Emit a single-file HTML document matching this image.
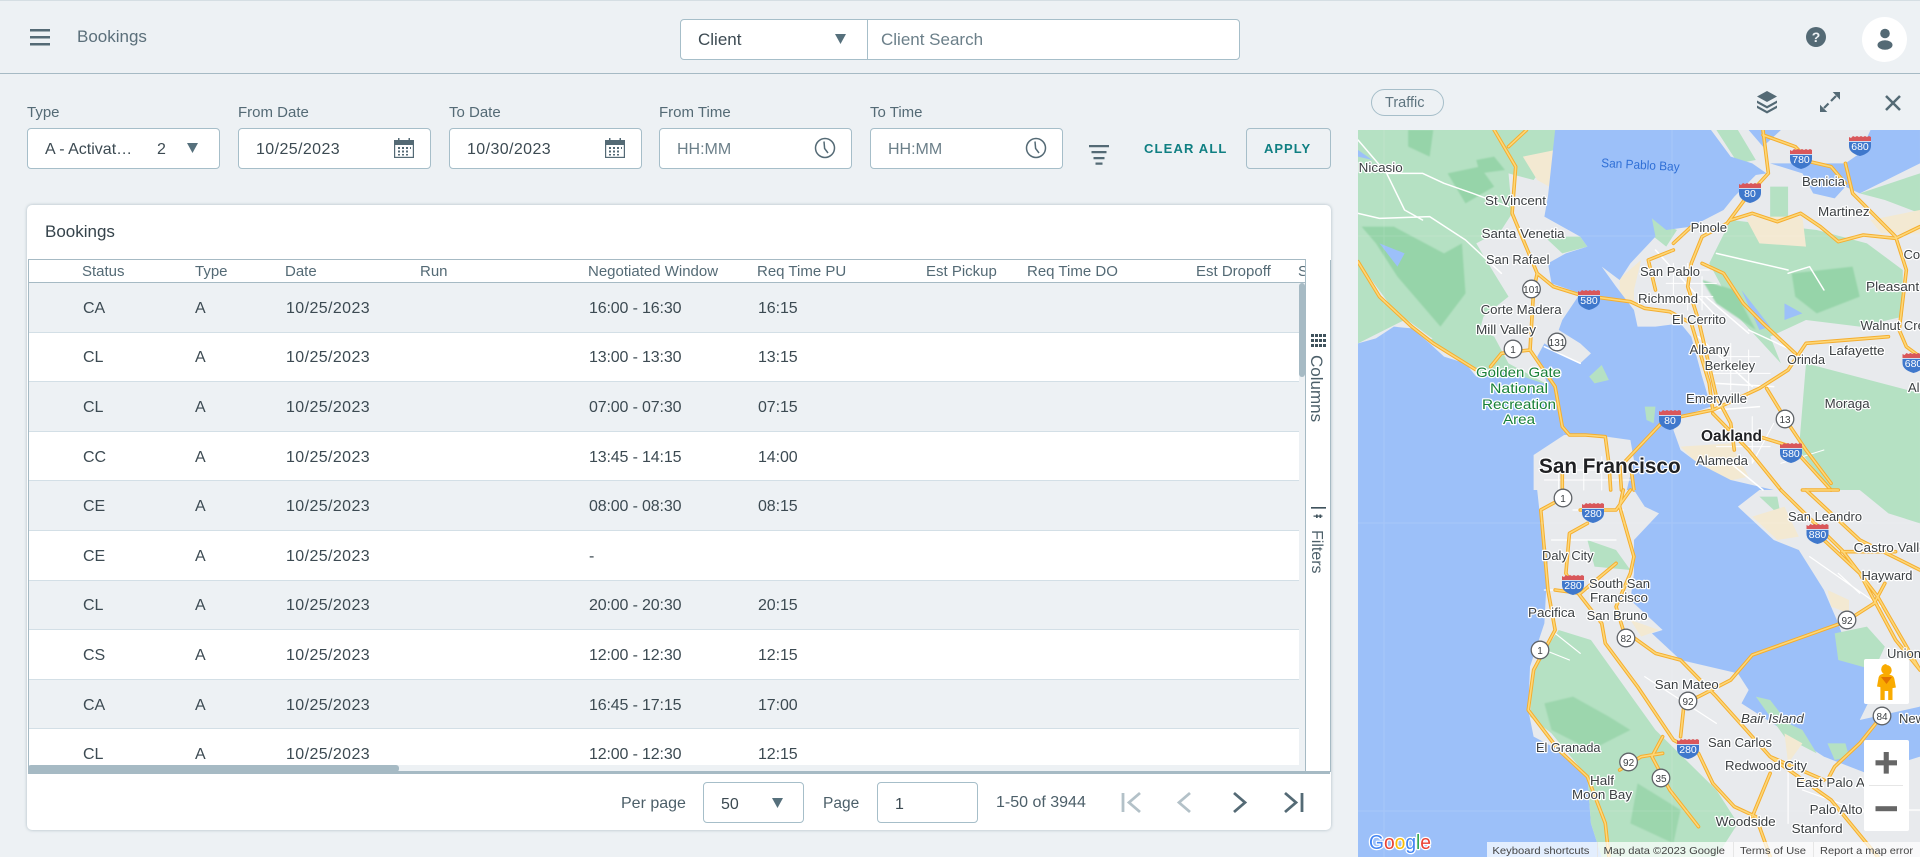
<!DOCTYPE html>
<html lang="en">
<head>
<meta charset="utf-8">
<title>Bookings</title>
<style>
html,body{margin:0;padding:0}
body{width:1920px;height:857px;position:relative;overflow:hidden;background:#edf1f4;font-family:"Liberation Sans",sans-serif;color:#3c4a52}
.a{position:absolute;white-space:nowrap}
.line{position:absolute;background:#a6bac4}
.box{position:absolute;box-sizing:border-box;background:#fff;border:1px solid #a6bec9;border-radius:4px}
.lbl{position:absolute;font-size:15px;line-height:18px;color:#546a75;white-space:nowrap}
.val{position:absolute;font-size:16px;line-height:20px;color:#3c4a52;letter-spacing:.4px;white-space:nowrap}
.ph{position:absolute;font-size:16px;line-height:20px;color:#6b7f89;white-space:nowrap}
.hd{position:absolute;top:263px;font-size:15px;line-height:18px;color:#546a75;white-space:nowrap}
.row{height:49.6px;box-sizing:border-box;padding-top:3px;border-bottom:1px solid #d3dfe6;display:flex;align-items:center;font-size:16px;color:#3c4a52;background:#fff}
.row:nth-child(odd){background:#edf1f4}
.row span{display:block;white-space:nowrap}
.s{width:112px;margin-left:54px}
.t{width:91px}
.d{width:303px;letter-spacing:.4px}
.w{width:169px;letter-spacing:-.15px}
.r{width:80px;letter-spacing:-.1px}
svg{position:absolute;overflow:hidden}
.rd{fill:none;vector-effect:non-scaling-stroke;stroke-linejoin:round;stroke-linecap:round}
.m text{font-family:"Liberation Sans",sans-serif;font-size:13px;fill:#3c4043;paint-order:stroke;stroke:#fff;stroke-width:2.4px;stroke-linejoin:round}
.m .g text{font-size:14px;fill:#188038}
.sh{font-size:10.5px!important;fill:#fff!important;stroke:none!important;text-anchor:middle;font-weight:400}
.us{font-size:10px!important;fill:#3c4043!important;stroke:none!important;text-anchor:middle}
.at{font-size:10.5px!important;fill:#444!important;stroke:none!important}
</style>
</head>
<body>
<div class="a" style="left:0;top:0;width:1920px;height:1px;background:#d5dee3"></div>
<div class="line" style="left:0;top:73px;width:1920px;height:1px"></div>

<svg style="left:30px;top:29px" width="20" height="17" viewBox="0 0 20 17"><path d="M0 0h20v2.5H0zM0 7h20v2.5H0zM0 14h20v2.5H0z" fill="#546a75"/></svg>
<div class="a" style="left:77px;top:27px;font-size:17px;line-height:20px;color:#5b6f7a">Bookings</div>

<div class="box" style="left:680px;top:19px;width:560px;height:41px"></div>
<div class="a" style="left:867px;top:19px;width:1px;height:41px;background:#a6bec9"></div>
<div class="a" style="left:698px;top:30px;font-size:17px;line-height:20px;color:#3c4a52">Client</div>
<svg style="left:835px;top:34px" width="11" height="10"><path d="M0 0h11L5.500 10z" fill="#56707c"/></svg>
<div class="a" style="left:881px;top:30px;font-size:17px;line-height:20px;color:#6b7f89">Client Search</div>

<svg style="left:1805px;top:26px" width="22" height="22" viewBox="0 0 22 22"><circle cx="11" cy="11" r="10" fill="#546a75"/><text x="11" y="16" text-anchor="middle" font-family="Liberation Sans" font-weight="700" font-size="14" fill="#edf1f4">?</text></svg>
<div class="a" style="left:1862px;top:17px;width:45px;height:45px;border-radius:50%;background:#fff"></div>
<svg style="left:1875px;top:28px" width="20" height="22" viewBox="0 0 20 22"><circle cx="10" cy="5.500" r="4.800" fill="#546a75"/><ellipse cx="10" cy="17" rx="7.500" ry="4.800" fill="#546a75"/></svg>

<div class="lbl" style="left:27px;top:104px">Type</div>
<div class="lbl" style="left:238px;top:104px">From Date</div>
<div class="lbl" style="left:449px;top:104px">To Date</div>
<div class="lbl" style="left:659px;top:104px">From Time</div>
<div class="lbl" style="left:870px;top:104px">To Time</div>

<div class="box" style="left:27px;top:128px;width:193px;height:41px"></div>
<div class="val" style="left:45px;top:140px;letter-spacing:0">A - Activat…</div>
<div class="val" style="left:157px;top:140px">2</div>
<svg style="left:187px;top:143px" width="11" height="10"><path d="M0 0h11L5.500 10z" fill="#56707c"/></svg>

<div class="box" style="left:238px;top:128px;width:193px;height:41px"></div>
<div class="val" style="left:256px;top:140px">10/25/2023</div>
<svg style="left:394px;top:138px" width="20" height="20" viewBox="0 0 20 20"><path d="M4 0h1.500v3H4zM14.500 0H16v3h-1.500z" fill="#546a75"/><rect x="0" y="2" width="20" height="5" fill="#546a75"/><rect x=".6" y="5" width="18.800" height="14.400" fill="none" stroke="#546a75" stroke-width="1.200"/><path d="M4 9h2v2H4zM8 9h2v2H8zM12 9h2v2h-2zM16 9h1v2h-1zM4 12.500h2v2H4zM8 12.500h2v2H8zM12 12.500h2v2h-2zM4 16h2v1.500H4zM8 16h2v1.500H8zM12 16h2v1.500h-2z" fill="#546a75"/></svg>

<div class="box" style="left:449px;top:128px;width:193px;height:41px"></div>
<div class="val" style="left:467px;top:140px">10/30/2023</div>
<svg style="left:605px;top:138px" width="20" height="20" viewBox="0 0 20 20"><path d="M4 0h1.500v3H4zM14.500 0H16v3h-1.500z" fill="#546a75"/><rect x="0" y="2" width="20" height="5" fill="#546a75"/><rect x=".6" y="5" width="18.800" height="14.400" fill="none" stroke="#546a75" stroke-width="1.200"/><path d="M4 9h2v2H4zM8 9h2v2H8zM12 9h2v2h-2zM16 9h1v2h-1zM4 12.500h2v2H4zM8 12.500h2v2H8zM12 12.500h2v2h-2zM4 16h2v1.500H4zM8 16h2v1.500H8zM12 16h2v1.500h-2z" fill="#546a75"/></svg>

<div class="box" style="left:659px;top:128px;width:193px;height:41px"></div>
<div class="ph" style="left:677px;top:140px">HH:MM</div>
<svg style="left:814px;top:137px" width="22" height="22" viewBox="0 0 22 22"><circle cx="11" cy="11" r="9.500" fill="none" stroke="#546a75" stroke-width="1.500"/><path d="M10 4.500l.6 7 3.400 4.500" fill="none" stroke="#546a75" stroke-width="1.500"/></svg>

<div class="box" style="left:870px;top:128px;width:193px;height:41px"></div>
<div class="ph" style="left:888px;top:140px">HH:MM</div>
<svg style="left:1025px;top:137px" width="22" height="22" viewBox="0 0 22 22"><circle cx="11" cy="11" r="9.500" fill="none" stroke="#546a75" stroke-width="1.500"/><path d="M10 4.500l.6 7 3.400 4.500" fill="none" stroke="#546a75" stroke-width="1.500"/></svg>

<svg style="left:1089px;top:145px" width="20" height="20" viewBox="0 0 20 20"><path d="M0 0h20v2.200H0zM2.500 6h15v2.200h-15zM4.500 12h11v2.200h-11zM6.500 17.500h7v2.200h-7z" fill="#546a75"/></svg>
<div class="a" style="left:1144px;top:140px;font-size:13px;line-height:18px;font-weight:700;letter-spacing:1.15px;color:#0f7f82">CLEAR ALL</div>
<div class="box" style="left:1246px;top:128px;width:85px;height:41px;background:#edf1f4"></div>
<div class="a" style="left:1264px;top:140px;font-size:13px;line-height:18px;font-weight:700;letter-spacing:1px;color:#0f7f82">APPLY</div>

<div class="a" style="left:27px;top:205px;width:1304px;height:625px;background:#fff;border-radius:5px;box-shadow:0 0 3px rgba(90,120,135,.45)"></div>
<div class="a" style="left:45px;top:222px;font-size:17px;line-height:20px;color:#35434b">Bookings</div>

<div class="line" style="left:28px;top:259px;width:1277px;height:1px"></div>
<div class="line" style="left:28px;top:282px;width:1277px;height:1px"></div>
<div class="line" style="left:28px;top:260px;width:1px;height:511px"></div>

<div class="hd" style="left:82px">Status</div>
<div class="hd" style="left:195px">Type</div>
<div class="hd" style="left:285px">Date</div>
<div class="hd" style="left:420px">Run</div>
<div class="hd" style="left:588px">Negotiated Window</div>
<div class="hd" style="left:757px">Req Time PU</div>
<div class="hd" style="left:926px">Est Pickup</div>
<div class="hd" style="left:1027px">Req Time DO</div>
<div class="hd" style="left:1196px">Est Dropoff</div>
<div class="a" style="left:1298px;top:263px;width:7px;height:18px;overflow:hidden;font-size:15px;line-height:18px;color:#546a75">S</div>

<div class="a" style="left:29px;top:283px;width:1270px;height:482px;overflow:hidden;white-space:normal">
<div class="row"><span class="s">CA</span><span class="t">A</span><span class="d">10/25/2023</span><span class="w">16:00 - 16:30</span><span class="r">16:15</span></div>
<div class="row"><span class="s">CL</span><span class="t">A</span><span class="d">10/25/2023</span><span class="w">13:00 - 13:30</span><span class="r">13:15</span></div>
<div class="row"><span class="s">CL</span><span class="t">A</span><span class="d">10/25/2023</span><span class="w">07:00 - 07:30</span><span class="r">07:15</span></div>
<div class="row"><span class="s">CC</span><span class="t">A</span><span class="d">10/25/2023</span><span class="w">13:45 - 14:15</span><span class="r">14:00</span></div>
<div class="row"><span class="s">CE</span><span class="t">A</span><span class="d">10/25/2023</span><span class="w">08:00 - 08:30</span><span class="r">08:15</span></div>
<div class="row"><span class="s">CE</span><span class="t">A</span><span class="d">10/25/2023</span><span class="w">-</span><span class="r"></span></div>
<div class="row"><span class="s">CL</span><span class="t">A</span><span class="d">10/25/2023</span><span class="w">20:00 - 20:30</span><span class="r">20:15</span></div>
<div class="row"><span class="s">CS</span><span class="t">A</span><span class="d">10/25/2023</span><span class="w">12:00 - 12:30</span><span class="r">12:15</span></div>
<div class="row"><span class="s">CA</span><span class="t">A</span><span class="d">10/25/2023</span><span class="w">16:45 - 17:15</span><span class="r">17:00</span></div>
<div class="row"><span class="s">CL</span><span class="t">A</span><span class="d">10/25/2023</span><span class="w">12:00 - 12:30</span><span class="r">12:15</span></div>
</div>

<div class="a" style="left:1299px;top:283px;width:6px;height:488px;background:#edf1f4"></div>
<div class="a" style="left:1299px;top:283px;width:6px;height:94px;background:#a6bac4;border-radius:3px"></div>
<div class="a" style="left:29px;top:765px;width:1276px;height:6px;background:#edf1f4"></div>
<div class="a" style="left:28px;top:765px;width:371px;height:7px;background:#a6bac4;border-radius:3px"></div>
<div class="line" style="left:28px;top:771px;width:1302px;height:3px"></div>

<div class="line" style="left:1305px;top:259px;width:1px;height:512px"></div>
<div class="line" style="left:1330px;top:260px;width:1px;height:512px"></div>
<svg style="left:1311px;top:334px" width="15" height="14" viewBox="0 0 15 14"><path d="M0 0h3v3H0zM4 0h3v3H4zM8 0h3v3H8zM12 0h3v3h-3zM0 5h3v3H0zM4 5h3v3H4zM8 5h3v3H8zM12 5h3v3h-3zM0 10h3v3H0zM4 10h3v3H4zM8 10h3v3H8zM12 10h3v3h-3z" fill="#3f525c"/></svg>
<div class="a" style="left:1307px;top:355px;writing-mode:vertical-rl;font-size:17px;line-height:18px;color:#4c5f69">Columns</div>
<svg style="left:1311px;top:507px" width="15" height="12" viewBox="0 0 15 12"><path d="M0 0h15v1.600H0zM5 7.500h1.700v3.500H5zM8.500 7.500h1.700v3.500H8.500zM2.500 8.500h9v1.300h-9z" fill="#3f525c"/></svg>
<div class="a" style="left:1307px;top:530px;writing-mode:vertical-rl;font-size:16px;line-height:18px;color:#4c5f69">Filters</div>

<div class="a" style="left:621px;top:794px;font-size:16px;line-height:20px;color:#4c5f69">Per page</div>
<div class="box" style="left:703px;top:782px;width:101px;height:41px"></div>
<div class="val" style="left:721px;top:795px;letter-spacing:0">50</div>
<svg style="left:772px;top:798px" width="11" height="10"><path d="M0 0h11L5.500 10z" fill="#56707c"/></svg>
<div class="a" style="left:823px;top:794px;font-size:15.500px;line-height:20px;color:#4c5f69">Page</div>
<div class="box" style="left:877px;top:782px;width:101px;height:41px"></div>
<div class="val" style="left:895px;top:795px">1</div>
<div class="a" style="left:996px;top:793px;font-size:16px;line-height:20px;color:#4c5f69">1-50 of 3944</div>
<svg style="left:1120px;top:790px" width="190" height="26" viewBox="0 0 190 26" fill="none" stroke-width="2.800">
<path d="M3 3v19" stroke="#b3c1c8"/><path d="M20 3L9 12.500 20 22" stroke="#b3c1c8"/>
<path d="M70 3L59 12.500 70 22" stroke="#b3c1c8"/>
<path d="M114 3l11 9.500L114 22" stroke="#546a75"/>
<path d="M165 3l11 9.500L165 22" stroke="#546a75"/><path d="M182 3v19" stroke="#546a75"/>
</svg>

<div class="a" style="left:1371px;top:89px;width:71px;height:25px;border:1px solid #a6bec9;border-radius:14px"></div>
<div class="a" style="left:1385px;top:92.500px;font-size:14.500px;line-height:20px;color:#5e747f">Traffic</div>
<svg style="left:1756px;top:91px" width="22" height="23" viewBox="0 0 22 23" fill="#546a75"><path d="M11 0l10 5.500-10 5.500L1 5.500z"/><path d="M1 9.500l10 5.500 10-5.500v2.500l-10 5.500L1 12z"/><path d="M1 14.500l10 5.500 10-5.500V17l-10 5.500L1 17z"/></svg>
<svg style="left:1820px;top:92px" width="21" height="21" viewBox="0 0 21 21"><path d="M12.700 0H20v7.700zM0 12.700V20h7.300z" fill="#546a75"/><path d="M16 4l-5 5M4 16l4.500-4.500" stroke="#546a75" stroke-width="2.200" fill="none"/></svg>
<svg style="left:1884px;top:94px" width="18" height="18" viewBox="0 0 18 18"><path d="M2 2l14 14M16 2L2 16" stroke="#546a75" stroke-width="2.500"/></svg>

<svg class="m" style="left:1358px;top:130px" width="562" height="727" viewBox="0 0 562 727">
<defs>
<filter id="b" x="-5%" y="-5%" width="110%" height="110%"><feGaussianBlur stdDeviation="2.500"/></filter>
<path id="z1" class="rd" d="M380 0L440 110 430 250 500 430 490 480 480 660 550 770 570 890 590 915 635 915 690 920 700 1000 705 1080M420 50L470 0M500 430L545 470 620 495 760 515 800 535 870 545 930 580 980 760 990 840M1130 0L1145 130 1085 200 1030 280 960 320 930 400 920 470 950 570 1000 800 1040 880 1050 960M1040 270L1100 250 1170 275 1235 250 1290 290 1340 335 1410 315 1500 325 1568 290M1360 100L1380 190 1500 320 1530 420 1510 600 1530 650 1568 680M1130 15L1220 50 1260 95 1320 110 1360 160M740 1000L855 870 990 840 1120 775 1200 720 1250 640 1480 620M1140 775L1200 880 1250 960 1320 1060M1120 920L1210 950 1320 1080M990 850L1090 960 1180 1080M0 395L60 500 150 590 210 640 270 680 330 720M960 400L1020 430 1075 520 1130 580 1220 670M880 360L810 390 830 480M880 340L930 290M730 1000L735 1080M760 1000L770 1080M570 1030V1080M480 660L400 670 370 710"/>
<path id="z2" class="rd" d="M740 0L730 50 770 200 760 250 720 350 740 420 830 490 900 510 1000 620 1150 800 1320 930 1450 1100M640 100L590 130 580 250 600 290 680 400 690 460 780 590 880 750 950 790 990 880 1050 950 1110 980 1150 1100M620 60L720 60 760 0M1360 395L1100 495 1040 570 950 620 910 640 900 740M1360 395L1440 340 1470 280M1280 130L1400 250 1500 450 1568 540M570 25L510 60 530 300 550 420 490 540 475 660 560 780 640 860 690 1000 700 1100M1460 680L1400 760 1330 830 1310 870M850 740L820 800 850 860 870 900 950 1010M730 840L790 800 850 790M1180 0L1350 180 1450 320 1568 540M1250 0L1400 150 1568 240M1300 870L1150 800M1150 850L1100 980M1240 0L1340 0M1350 185L1500 185M550 300L620 310 720 220"/>
</defs>
<rect width="562" height="727" fill="#e8eaed"/>

<g transform="scale(.3584 .33333)">
<path d="M0 0H550V60L490 150 420 130 430 250 400 300 330 340 380 430 420 500 350 560 340 600 230 640 200 620 100 540 0 395Z" fill="#b5e1c3"/>
<path d="M0 400L50 490 130 570 0 640Z" fill="#b5e1c3"/>
<path d="M140 0H210L200 80 140 50ZM250 130L340 110 380 170 300 220ZM10 290L100 290 240 370 290 340 300 490 230 590 110 440 50 340ZM330 90L380 80 410 120 340 130Z" fill="#96d4a9" filter="url(#b)"/>
<path d="M1040 270L1280 300 1420 340 1520 420 1520 560 1400 590 1250 570 1150 620 1180 700 1060 560 980 400Z" fill="#b5e1c3"/>
<path d="M1210 430L1380 410 1400 500 1280 550 1220 500ZM960 450L1050 480 1110 600 1000 520Z" fill="#96d4a9" filter="url(#b)"/>
<path d="M1250 700L1568 790V1080H1320L1230 960Z" fill="#b5e1c3"/>
<path d="M1000 0H1060L1110 90 1060 100ZM820 265L890 300 860 350 825 320ZM1150 170L1200 170 1200 270 1150 270ZM1400 190L1568 130V250L1470 210ZM520 320L620 320 640 350 570 370Z" fill="#b5e1c3"/>
<path d="M460 80L550 60 550 180 500 150ZM1080 260L1240 260 1250 350 1120 340ZM730 445L790 390 770 480 770 520 730 500ZM900 950L1040 940 1090 1040 1000 1060ZM1430 270L1568 240V310L1460 310Z" fill="#f3e9d2"/>
<path d="M200 630L290 580 380 620 420 700 540 770 570 830 570 905 480 850 340 730Z" fill="#b5e1c3"/>
<path d="M0 640L50 625 100 590 150 595 200 640 240 680 300 700 330 740 420 725 530 765 560 830 575 915 490 975 490 1080H0Z" fill="#9cc0f9"/>
<path d="M550 0H985L1040 80 1100 100 1140 130 1110 135 1050 200 1020 240 930 290 860 300 820 265 830 320 760 400 730 450 680 410 720 470 770 540 780 590 830 590 900 580 930 620 960 740 985 830 900 860 880 900 900 960 950 1000 1040 1050 1160 1080H750L770 990 760 930 640 912 575 915 560 830 530 765 500 680 520 640 580 680 620 700 650 670 620 640 560 600 570 570 620 490 540 460 530 400 580 370 640 350 620 320 520 260 530 200 540 100Z" fill="#9cc0f9"/>
<path d="M1150 100L1240 130 1270 190 1330 205 1360 170 1400 190 1568 100V0H1430L1400 70 1360 100 1310 100 1260 100ZM1180 0H1090L1130 50ZM1070 480L1150 590 1120 600ZM1190 520L1240 550 1190 570ZM40 90L0 60V80ZM60 340L130 370 110 410Z" fill="#9cc0f9"/>
<path d="M645 740L680 705 700 750 660 760ZM800 830L830 830 825 880 805 870Z" fill="#b5e1c3"/>
<path d="M0 30L80 130 180 130 240 160 320 190 420 230M0 250L60 265 200 260 300 330 400 430M80 130L130 240 180 270M1200 430L1260 410 1300 480M1000 370L1200 420M1090 600L1210 660M830 360L1000 560M950 620L1100 770M1000 760L1160 770M1000 840L1120 830M970 500L1090 610M1040 1000L1130 1080M520 650L620 700" class="rd" stroke="#fff" stroke-width="1.500"/>
<path d="M880 420H980M860 460H1000M840 500H990M880 400V520M920 400V540M960 440V540M1030 680H1120M990 730H1150M1040 640V780M1090 660V800M1100 860V1000M1160 880L1100 1000M1000 950H1150M1180 1000L1300 960M520 1020H760M520 1050H760M560 1000V1080M630 990V1080M680 980V1080" class="rd" stroke="#fff" stroke-width="1"/>
<use href="#z1" stroke="#f5ae2f" stroke-width="3.600"/>
<use href="#z1" stroke="#fdd778" stroke-width="1.600"/>
</g>

<g transform="translate(0 360) scale(.3584 .33333)">
<path d="M0 0H500L510 100 530 200 520 400 480 530 475 660 490 740 560 780 640 860 650 1000 680 1101H0Z" fill="#9cc0f9"/>
<path d="M770 0H1120L1060 50 1160 150 1230 180 1300 300 1340 400 1350 430 1450 580 1400 690 1568 650V800H1300L1200 730 1070 640 1090 600 1060 550 900 510 820 430 850 420 760 330 770 250 770 150 840 70 800 50Z" fill="#9cc0f9"/>
<path d="M1300 800L1400 720 1568 650V800L1420 850Z" fill="#9cc0f9"/>
<path d="M560 420L650 450 830 720 1000 900 1060 1000 1000 1101H680L650 1000 640 860 540 730 480 680 490 530Z" fill="#b5e1c3"/>
<path d="M520 640L600 620 700 680 760 720 650 780 540 720ZM780 880L900 960 880 1060 760 1000Z" fill="#9cd6ad" filter="url(#b)"/>
<path d="M640 150L720 180 760 240 660 230ZM1400 0H1568V100L1480 70ZM1120 20L1170 20 1180 80ZM1310 760L1360 760 1370 800 1330 810ZM1110 620L1150 630 1200 700 1240 720 1280 790 1190 740ZM1330 430L1420 410 1470 470 1440 540 1340 510Z" fill="#b5e1c3"/>
<path d="M1100 80L1190 50 1230 140 1170 150ZM1310 300L1370 330 1370 370 1320 350ZM760 390L840 420 790 440ZM1190 730L1240 760 1200 820Z" fill="#f3e9d2"/>
<path d="M600 60H740M540 150H720M520 300H640M550 430L620 490M1200 820V1000M1300 960H1568M1240 900L1500 1000M1260 200L1460 350M1340 250L1400 310M800 560L1000 700M520 480L590 510" class="rd" stroke="#fff" stroke-width="1.200"/>
<use href="#z2" stroke="#f5ae2f" stroke-width="3.600"/>
<use href="#z2" stroke="#fdd778" stroke-width="1.600"/>
</g>

<path d="M314 0V727M26 0V727M0 106H562M0 393H562M0 681H562" stroke="#fff" stroke-opacity=".12" fill="none"/>

<text x=".7" y="42" textLength="44" lengthAdjust="spacingAndGlyphs">Nicasio</text>
<text x="243" y="39" textLength="78.500" lengthAdjust="spacingAndGlyphs" transform="rotate(3 282 39)" style="fill:#2f6fd6;stroke:none;font-size:12.500px">San Pablo Bay</text>
<text x="127" y="75" textLength="61" lengthAdjust="spacingAndGlyphs">St Vincent</text>
<text x="123.600" y="108" textLength="83" lengthAdjust="spacingAndGlyphs">Santa Venetia</text>
<text x="128" y="134" textLength="63.500" lengthAdjust="spacingAndGlyphs">San Rafael</text>
<text x="122.600" y="184" textLength="81" lengthAdjust="spacingAndGlyphs">Corte Madera</text>
<text x="118" y="204" textLength="60" lengthAdjust="spacingAndGlyphs">Mill Valley</text>
<g class="g">
<text x="118" y="247" textLength="85" lengthAdjust="spacingAndGlyphs">Golden Gate</text>
<text x="132" y="263" textLength="58" lengthAdjust="spacingAndGlyphs">National</text>
<text x="124" y="279" textLength="74" lengthAdjust="spacingAndGlyphs">Recreation</text>
<text x="145" y="294" textLength="32" lengthAdjust="spacingAndGlyphs">Area</text>
</g>
<text x="444" y="56" textLength="43" lengthAdjust="spacingAndGlyphs">Benicia</text>
<text x="460" y="86" textLength="51.600" lengthAdjust="spacingAndGlyphs">Martinez</text>
<text x="332.600" y="102" textLength="36.500" lengthAdjust="spacingAndGlyphs">Pinole</text>
<text x="282" y="146" textLength="60" lengthAdjust="spacingAndGlyphs">San Pablo</text>
<text x="280" y="173" textLength="60" lengthAdjust="spacingAndGlyphs">Richmond</text>
<text x="314" y="194" textLength="54" lengthAdjust="spacingAndGlyphs">El Cerrito</text>
<text x="331.500" y="224" textLength="40" lengthAdjust="spacingAndGlyphs">Albany</text>
<text x="346.600" y="240" textLength="50.500" lengthAdjust="spacingAndGlyphs">Berkeley</text>
<text x="328" y="273" textLength="61" lengthAdjust="spacingAndGlyphs">Emeryville</text>
<text x="343" y="311" textLength="61" lengthAdjust="spacingAndGlyphs" style="font-size:16px;fill:#202124;font-weight:700">Oakland</text>
<text x="181" y="343" textLength="141.600" lengthAdjust="spacingAndGlyphs" style="font-size:21px;fill:#202124;font-weight:700">San Francisco</text>
<text x="338" y="335" textLength="52" lengthAdjust="spacingAndGlyphs">Alameda</text>
<text x="466.600" y="278" textLength="45" lengthAdjust="spacingAndGlyphs">Moraga</text>
<text x="429" y="234" textLength="38" lengthAdjust="spacingAndGlyphs">Orinda</text>
<text x="471" y="225" textLength="55.500" lengthAdjust="spacingAndGlyphs">Lafayette</text>
<text x="502.500" y="200" textLength="78" lengthAdjust="spacingAndGlyphs">Walnut Creek</text>
<text x="508" y="161" textLength="76" lengthAdjust="spacingAndGlyphs">Pleasant Hill</text>
<text x="545.500" y="129">Concord</text>
<text x="550" y="262">Alamo</text>
<text x="430" y="391" textLength="74" lengthAdjust="spacingAndGlyphs">San Leandro</text>
<text x="495.700" y="422" textLength="80" lengthAdjust="spacingAndGlyphs">Castro Valley</text>
<text x="503.500" y="450" textLength="51" lengthAdjust="spacingAndGlyphs">Hayward</text>
<text x="529" y="528">Union City</text>
<text x="541" y="593">Newark</text>
<text x="184" y="430" textLength="51.600" lengthAdjust="spacingAndGlyphs">Daly City</text>
<text x="231" y="458" textLength="61" lengthAdjust="spacingAndGlyphs">South San</text>
<text x="232" y="472" textLength="58" lengthAdjust="spacingAndGlyphs">Francisco</text>
<text x="170" y="487" textLength="47" lengthAdjust="spacingAndGlyphs">Pacifica</text>
<text x="228.600" y="490" textLength="61" lengthAdjust="spacingAndGlyphs">San Bruno</text>
<text x="296.800" y="559" textLength="64" lengthAdjust="spacingAndGlyphs">San Mateo</text>
<text x="383" y="593" textLength="62.700" lengthAdjust="spacingAndGlyphs" font-style="italic">Bair Island</text>
<text x="350" y="617" textLength="64" lengthAdjust="spacingAndGlyphs">San Carlos</text>
<text x="178" y="622" textLength="64.500" lengthAdjust="spacingAndGlyphs">El Granada</text>
<text x="367" y="640" textLength="82" lengthAdjust="spacingAndGlyphs">Redwood City</text>
<text x="438" y="657" textLength="83" lengthAdjust="spacingAndGlyphs">East Palo Alto</text>
<text x="232" y="655" textLength="24" lengthAdjust="spacingAndGlyphs">Half</text>
<text x="214" y="669" textLength="60" lengthAdjust="spacingAndGlyphs">Moon Bay</text>
<text x="451.600" y="684" textLength="53" lengthAdjust="spacingAndGlyphs">Palo Alto</text>
<text x="433.700" y="703" textLength="51" lengthAdjust="spacingAndGlyphs">Stanford</text>
<text x="357.700" y="696" textLength="60" lengthAdjust="spacingAndGlyphs">Woodside</text>

<defs>
<g id="i"><path d="M-11-6Q-5-8 0-8T11-6V1Q11 8 0 11-11 8-11 1Z" fill="#3f78cc"/><path d="M-11-4V-8L-9-7-7-9-5-8-3-9-1-8 1-9 3-8 5-9 7-8 9-9 11-8V-4Z" fill="#d9575a"/><path d="M-11-3.500H11" stroke="#fff" stroke-width=".8"/></g>
<g id="u"><circle r="8.800" fill="#fff" stroke="#5f6368" stroke-width="1.300"/></g>
</defs>
<g>
<use href="#i" x="502" y="15"/><text class="sh" x="502" y="20">680</text>
<use href="#i" x="443" y="28"/><text class="sh" x="443" y="33">780</text>
<use href="#i" x="392" y="62"/><text class="sh" x="392" y="67">80</text>
<use href="#i" x="231" y="169"/><text class="sh" x="231" y="174">580</text>
<use href="#i" x="312" y="289"/><text class="sh" x="312" y="294">80</text>
<use href="#i" x="433" y="322"/><text class="sh" x="433" y="327">580</text>
<use href="#i" x="555.500" y="232"/><text class="sh" x="555.500" y="237">680</text>
<use href="#i" x="235" y="382"/><text class="sh" x="235" y="387">280</text>
<use href="#i" x="459.500" y="403"/><text class="sh" x="459.500" y="408">880</text>
<use href="#i" x="215" y="454"/><text class="sh" x="215" y="459">280</text>
<use href="#i" x="330" y="618"/><text class="sh" x="330" y="623">280</text>
<use href="#u" x="173.500" y="159"/><text class="us" x="173.500" y="163">101</text>
<use href="#u" x="155" y="219"/><text class="us" x="155" y="223">1</text>
<use href="#u" x="199" y="212"/><text class="us" x="199" y="216">131</text>
<use href="#u" x="427" y="289"/><text class="us" x="427" y="293">13</text>
<use href="#u" x="205" y="368"/><text class="us" x="205" y="372">1</text>
<use href="#u" x="268" y="508"/><text class="us" x="268" y="512">82</text>
<use href="#u" x="182" y="520"/><text class="us" x="182" y="524">1</text>
<use href="#u" x="489" y="490"/><text class="us" x="489" y="494">92</text>
<use href="#u" x="330" y="571"/><text class="us" x="330" y="575">92</text>
<use href="#u" x="524" y="586"/><text class="us" x="524" y="590">84</text>
<use href="#u" x="270.600" y="632"/><text class="us" x="270.600" y="636">92</text>
<use href="#u" x="303" y="648"/><text class="us" x="303" y="652">35</text>
</g>

<rect x="506" y="529" width="45" height="45" rx="2" fill="#fff"/>
<path d="M528.500 535a5.200 5.200 0 0 1 5.200 5.200 5.200 5.200 0 0 1-2.500 4.400c3.200.5 4.800 2 5.200 4.500l1.500 8.400-3.400.6V570h-4.300v-9h-3.500v9h-4.300v-12.900l-3.400-.6 1.500-8.400c.4-2.500 2-4 5.200-4.500a5.200 5.200 0 0 1-2.500-4.400 5.200 5.200 0 0 1 5.200-5.200z" fill="#f9ab00"/>
<path d="M523 547h11l-5.500 7z" fill="#e37400"/>
<rect x="506" y="610" width="45" height="91" rx="2" fill="#fff"/>
<path d="M517.500 630.200h21.500v5.200h-21.500zM525.700 622h5.100v21.600h-5.100z" fill="#666"/>
<rect x="511" y="655" width="34" height="1" fill="#e6e6e6"/>
<rect x="517.500" y="676.200" width="21.500" height="5" fill="#666"/>

<text x="11" y="719" style="font-size:20px;stroke:#fff;stroke-width:2.500px;fill:#4285f4" textLength="62" lengthAdjust="spacingAndGlyphs">G<tspan style="fill:#ea4335">o</tspan><tspan style="fill:#fbbc05">o</tspan><tspan style="fill:#4285f4">g</tspan><tspan style="fill:#34a853">l</tspan><tspan style="fill:#ea4335">e</tspan></text>

<rect x="129" y="712" width="433" height="15" fill="#fff" fill-opacity=".72"/>
<rect x="239" y="712" width="1" height="15" fill="#e6e6e6"/>
<rect x="375" y="712" width="1" height="15" fill="#e6e6e6"/>
<rect x="455" y="712" width="1" height="15" fill="#e6e6e6"/>
<text class="at" x="134.400" y="724" textLength="97" lengthAdjust="spacingAndGlyphs">Keyboard shortcuts</text>
<text class="at" x="245.500" y="724" textLength="121.500" lengthAdjust="spacingAndGlyphs">Map data ©2023 Google</text>
<text class="at" x="382" y="724" textLength="66" lengthAdjust="spacingAndGlyphs">Terms of Use</text>
<text class="at" x="462" y="724" textLength="93" lengthAdjust="spacingAndGlyphs">Report a map error</text>
</svg>
</body>
</html>
